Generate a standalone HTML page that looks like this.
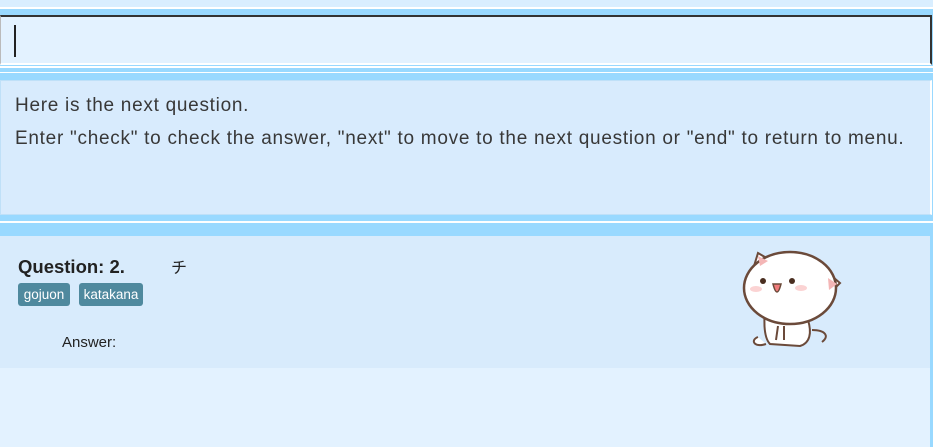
<!DOCTYPE html><html><head><style>
body{margin:0;width:933px;height:447px;background:#e3f2ff;position:relative;overflow:hidden;font-family:"Liberation Sans","DejaVu Sans",sans-serif;color:#222}
div{position:absolute;box-sizing:border-box}
</style></head><body>
<div style="left:0;top:0;width:933px;height:7px;background:#d9eeff"></div>
<div style="left:0;top:7px;width:933px;height:2px;background:#fff"></div>
<div style="left:0;top:9px;width:933px;height:57px;background:#99d9ff"></div>
<div style="left:0;top:15px;width:932px;height:50px;background:#e3f2ff;border-top:2px solid #333;border-right:2px solid #333;border-left:1px solid #bbb;border-bottom:2px solid #fff"></div>
<div style="left:14px;top:25px;width:2px;height:32px;background:#222"></div>
<div style="left:0;top:66px;width:933px;height:2px;background:#fff"></div>
<div style="left:0;top:68px;width:933px;height:154px;background:#99d9ff"></div>
<div style="left:0;top:72px;width:933px;height:1px;background:#fff"></div>
<div style="left:0;top:80px;width:932px;height:135px;background:#d8ebfd;border:1px solid #bfe0f8;border-right:2px solid #fff"></div>
<div style="left:15px;top:89px;font-size:19px;letter-spacing:0.72px;line-height:33px;color:#383838;white-space:nowrap">Here is the next question.<br>Enter "check" to check the answer, "next" to move to the next question or "end" to return to menu.</div>
<div style="left:0;top:221px;width:933px;height:2px;background:#fff"></div>
<div style="left:0;top:223px;width:933px;height:13px;background:#99d9ff"></div>
<div style="left:930px;top:236px;width:3px;height:211px;background:#99d9ff"></div>
<div style="left:0;top:236px;width:930px;height:132px;background:#d8ebfc"></div>
<div style="left:18px;top:256px;font-size:18.5px;font-weight:bold;color:#222">Question: 2.</div>
<div style="left:171px;top:254px;font-size:16px;font-family:'Noto Sans CJK JP',sans-serif">チ</div>
<div style="left:18px;top:283px;width:52px;height:23px;text-align:center;background:#4f899e;border-radius:3px;color:#fff;font-size:13.5px;line-height:23px">gojuon</div>
<div style="left:79px;top:283px;width:64px;height:23px;text-align:center;background:#4f899e;border-radius:3px;color:#fff;font-size:13.5px;line-height:23px">katakana</div>
<div style="left:62px;top:334px;font-size:15px;color:#222">Answer:</div>
<svg style="position:absolute;left:740px;top:248px" width="105" height="105" viewBox="0 0 105 105">
<path d="M14 18 L18 5 L30 12 Z" fill="#fff" stroke="#6b4a3a" stroke-width="2"/>
<path d="M87 24 L100 35 L90 45 Z" fill="#fff" stroke="#6b4a3a" stroke-width="2"/>
<path d="M28 50 C22 70 24 90 30 96 L60 98 C70 95 72 85 68 72 L60 50 Z" fill="#fff" stroke="#6b4a3a" stroke-width="2"/>
<ellipse cx="50" cy="40" rx="46" ry="36" fill="#fff" stroke="#6b4a3a" stroke-width="2.5"/>
<path d="M18 8 L20 18 L28 13Z" fill="#f4b6b6"/><path d="M97 36 L88 30 L89 42Z" fill="#f4b6b6"/>
<circle cx="23" cy="33" r="3" fill="#4a2e20"/><circle cx="52" cy="33" r="3" fill="#4a2e20"/>
<ellipse cx="16" cy="41" rx="6" ry="3" fill="#fbd3d3"/><ellipse cx="61" cy="40" rx="6" ry="3" fill="#fbd3d3"/>
<path d="M33 36 Q37 52 41 36 Z" fill="#f07b7b" stroke="#6b4a3a" stroke-width="1.5"/>
<path d="M18 89 C10 92 14 100 26 96" fill="#fff" stroke="#6b4a3a" stroke-width="2"/>
<path d="M72 82 C85 82 90 88 82 94" fill="none" stroke="#6b4a3a" stroke-width="2"/>
<path d="M38 78 L36 92 M44 78 L44 92" stroke="#6b4a3a" stroke-width="2"/>
</svg>
</body></html>
